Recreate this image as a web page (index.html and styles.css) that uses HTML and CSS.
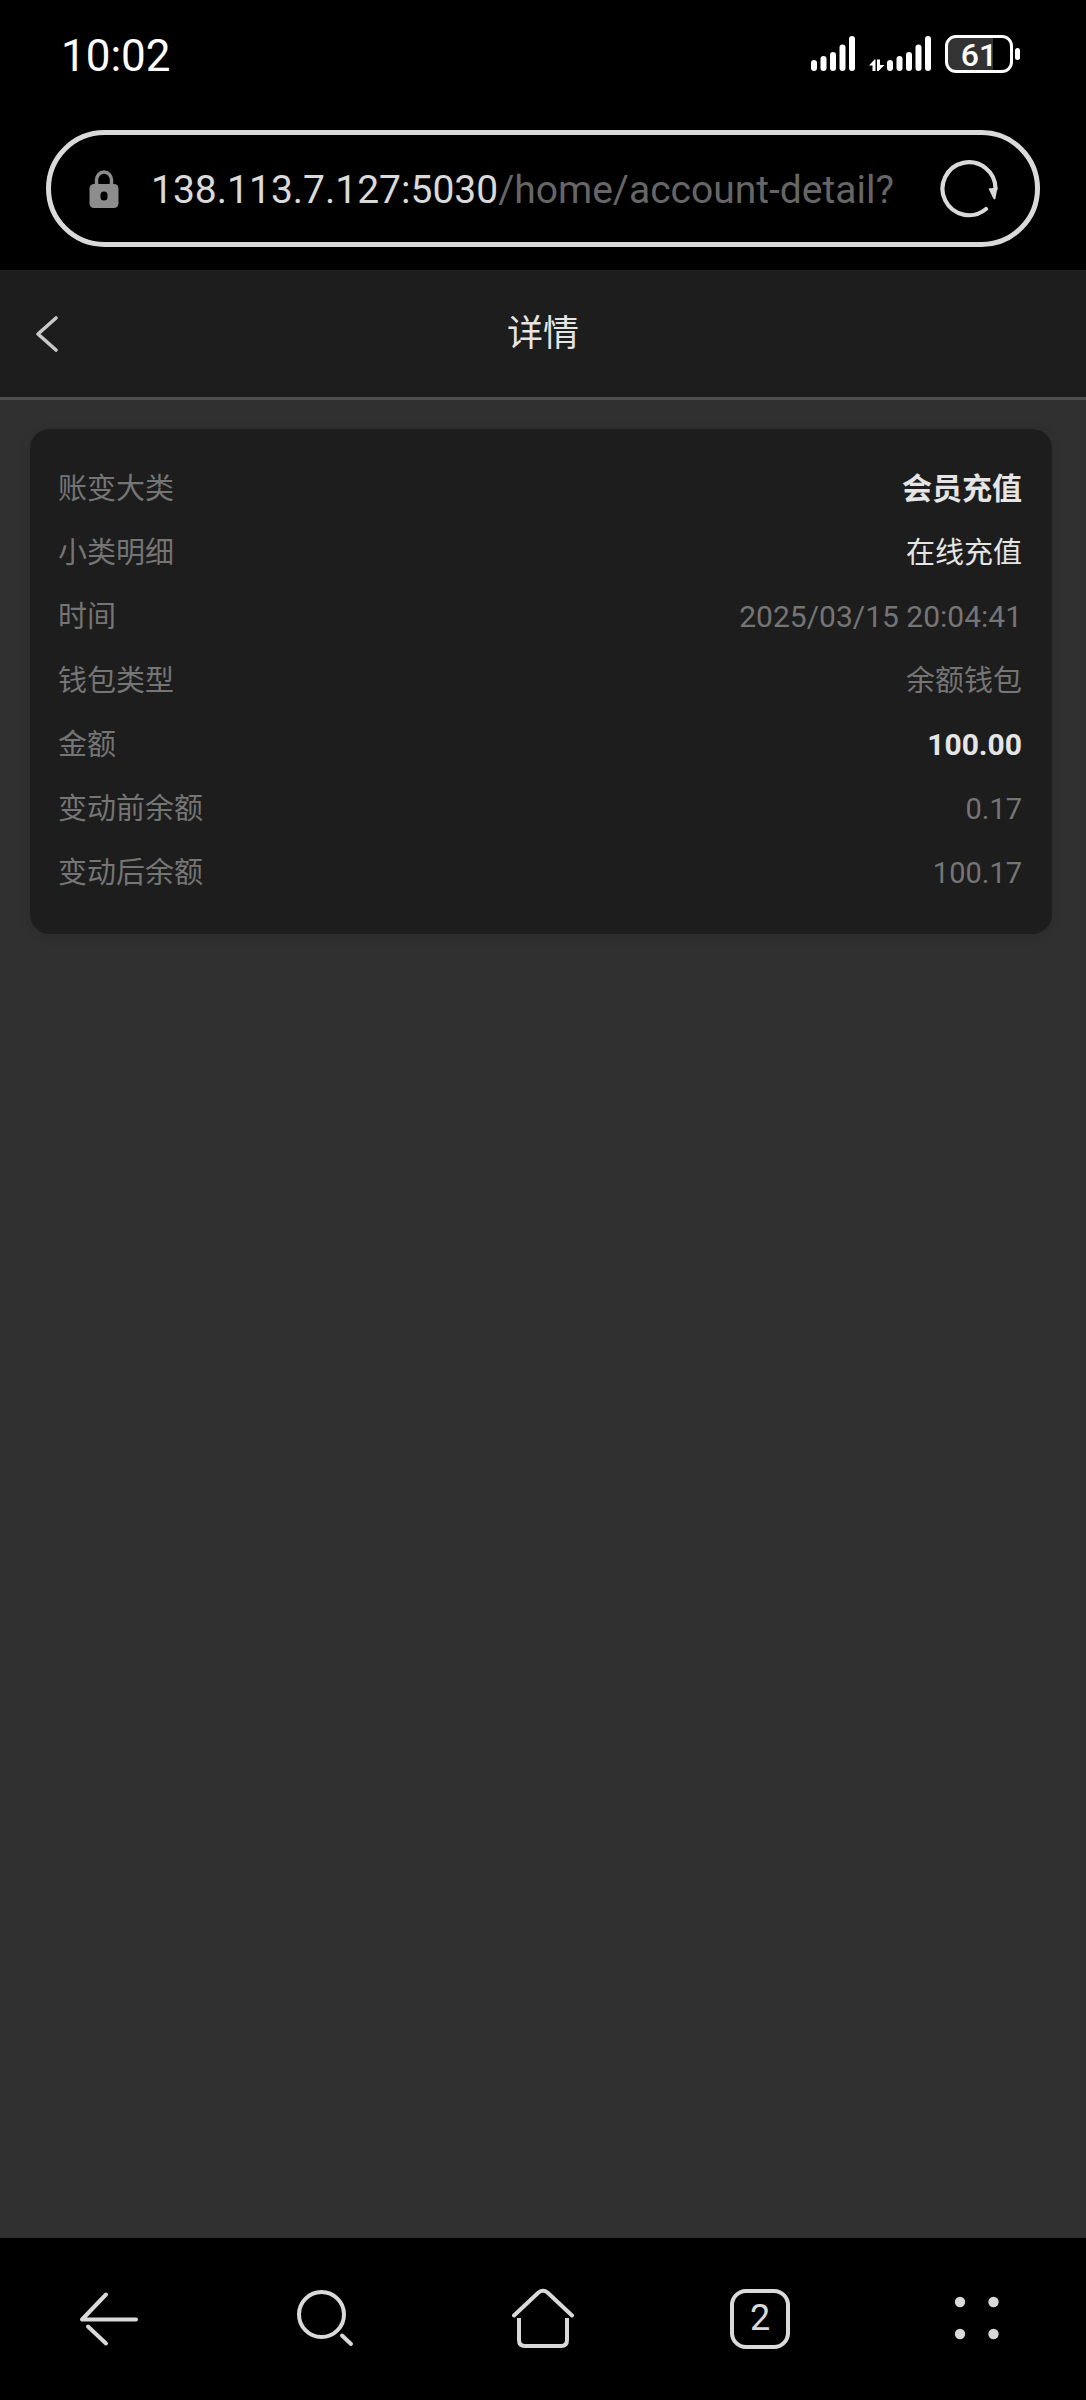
FILE: index.html
```html
<!DOCTYPE html>
<html lang="zh-CN">
<head>
    <meta charset="UTF-8">
    <meta name="viewport" content="width=device-width, initial-scale=1.0">
    <title>详情</title>
    <link rel="stylesheet" href="styles.css">
</head>
<body>
    <div class="status-bar">
        <span class="clock">10:02</span>
        <div class="status-icons">
            <svg class="signal" width="44" height="38" viewBox="0 0 44 38" fill="#fff">
                <rect x="0" y="25" width="6" height="11" rx="3"/>
                <rect x="9.5" y="21" width="6" height="15" rx="3"/>
                <rect x="19" y="17" width="6" height="19" rx="3"/>
                <rect x="28.5" y="9.5" width="6" height="26.5" rx="3"/>
                <rect x="38" y="1" width="6" height="35" rx="3"/>
            </svg>
            <svg class="signal" width="62" height="38" viewBox="0 0 62 38" fill="#fff">
                <path d="M0 30.5L5.500 24.500H6.500V36H3.500V30.500Z"/>
                <path d="M8 24.500H11V30H15.500L9.500 36H8Z"/>
                <rect x="18" y="25" width="6" height="11" rx="3"/>
                <rect x="27.5" y="21" width="6" height="15" rx="3"/>
                <rect x="37" y="17" width="6" height="19" rx="3"/>
                <rect x="46.5" y="9.5" width="6" height="26.5" rx="3"/>
                <rect x="56" y="1" width="6" height="35" rx="3"/>
            </svg>
            <div class="battery"><span>61</span></div>
            <span class="battery-cap"></span>
        </div>
    </div>

    <div class="browser-bar">
        <div class="address">
            <svg width="30" height="38" viewBox="0 0 30 38">
                <path d="M7.500 16V10a7.500 8 0 0 1 15 0v6" fill="none" stroke="#8d8d8d" stroke-width="3.5"/>
                <rect x="0.5" y="14" width="29" height="24" rx="4.5" fill="#8d8d8d"/>
                <rect x="11.5" y="21.5" width="7" height="9" rx="3.5" fill="#000"/>
            </svg>
            <button class="url" type="button"><span class="host">138.113.7.127:5030</span>/home/account-detail?</button>
            <button type="button" aria-label="刷新">
                <svg width="60" height="60" viewBox="0 0 60 60">
                    <path d="M47 50A26.500 26.500 0 1 1 56.500 30" fill="none" stroke="#dadada" stroke-width="4.2" stroke-linecap="round"/>
                    <path d="M49.500 29.500L58.500 28.500L56.500 39.500Q55.500 41.500 54 39Z" fill="#dadada"/>
                </svg>
            </button>
        </div>
    </div>

    <header class="page-header">
        <a href="#" aria-label="返回">
            <svg width="26" height="38" viewBox="0 0 26 38">
                <path d="M22 3L4 19L22 35" fill="none" stroke="#c9c9c9" stroke-width="3.6" stroke-linecap="round" stroke-linejoin="round"/>
            </svg>
        </a>
        <h1>详情</h1>
    </header>

    <main>
        <dl class="card">
            <div class="row"><dt>账变大类</dt><dd class="strong">会员充值</dd></div>
            <div class="row"><dt>小类明细</dt><dd class="light">在线充值</dd></div>
            <div class="row"><dt>时间</dt><dd><time>2025/03/15 20:04:41</time></dd></div>
            <div class="row"><dt>钱包类型</dt><dd>余额钱包</dd></div>
            <div class="row"><dt>金额</dt><dd class="strong">100.00</dd></div>
            <div class="row"><dt>变动前余额</dt><dd>0.17</dd></div>
            <div class="row"><dt>变动后余额</dt><dd>100.17</dd></div>
        </dl>
    </main>

    <nav class="toolbar">
        <button type="button" aria-label="后退">
            <svg width="64" height="64" viewBox="0 0 64 64">
                <path d="M29 7.500L5 32.500H59M11 39.500L29 56.500"/>
            </svg>
        </button>
        <button type="button" aria-label="搜索">
            <svg width="64" height="64" viewBox="0 0 64 64">
                <circle cx="27.500" cy="27.500" r="22.500"/>
                <path d="M48 48.500L57 57"/>
            </svg>
        </button>
        <button type="button" aria-label="主页">
            <svg width="64" height="64" viewBox="0 0 64 64">
                <path d="M3 28.500L27.500 5.500Q32 2 36.500 5.500L61 28.500"/>
                <path d="M8 31V53Q8 59 14 59H50Q56 59 56 53V31" stroke-linecap="butt"/>
            </svg>
        </button>
        <button type="button" aria-label="标签页">
            <span class="tabs">2</span>
        </button>
        <button type="button" aria-label="菜单">
            <svg class="dots" width="64" height="64" viewBox="0 0 64 64">
                <circle cx="15" cy="15" r="5.200"/>
                <circle cx="48.500" cy="15" r="5.200"/>
                <circle cx="15" cy="47" r="5.200"/>
                <circle cx="48.500" cy="47" r="5.200"/>
            </svg>
        </button>
    </nav>
</body>
</html>
```
FILE: styles.css
```css
* {
    box-sizing: border-box;
}
body {
    margin: 0;
    min-height: 100vh;
    display: flex;
    flex-direction: column;
    background: #303030;
    color: #757575;
    font-family: Roboto, "Noto Sans CJK SC", sans-serif;
}
button {
    padding: 0;
    border: none;
    background: none;
    color: inherit;
    font-family: inherit;
    cursor: pointer;
}
svg {
    display: block;
    flex-shrink: 0;
}

/* Phone status bar */
.status-bar {
    padding: 28px 66px 0 61px;
    display: flex;
    justify-content: space-between;
    align-items: flex-start;
    background: #000;
    color: #fff;
}
.clock {
    font-size: 44px;
    line-height: 56px;
}
.status-icons {
    display: flex;
    align-items: center;
    padding-top: 7px;
}
.signal {
    margin-right: 14px;
}
.battery {
    width: 68px;
    height: 38px;
    border: 3px solid #fff;
    border-radius: 11px;
    background: linear-gradient(90deg, #333 72%, #000 72%);
    font-size: 32px;
    line-height: 34px;
    font-weight: 500;
    text-align: center;
}
.battery-cap {
    width: 5px;
    height: 12px;
    margin-left: 2px;
    border-radius: 3px;
    background: #fff;
}

/* Browser address bar */
.browser-bar {
    padding: 46px 46px 23px;
    background: #000;
}
.address {
    height: 117px;
    padding: 0 36px 0 38px;
    display: flex;
    align-items: center;
    border: 5px solid #dadada;
    border-radius: 59px;
}
.url {
    flex: 1;
    margin: 0 40px 0 32px;
    padding-top: 2px;
    overflow: hidden;
    white-space: nowrap;
    text-align: left;
    font-size: 39px;
    line-height: 56px;
    color: #666;
}
.host {
    color: #dadada;
}

/* Page */
.page-header {
    height: 130px;
    padding: 0 34px;
    display: grid;
    grid-template-columns: 1fr auto 1fr;
    align-items: center;
    background: #1d1d1d;
    border-bottom: 3px solid #4e4e4e;
}
.page-header h1 {
    margin: 0;
    font-size: 36px;
    line-height: 48px;
    font-weight: 400;
    color: #e5e5e5;
}
main {
    flex: 1;
    padding: 29px 34px 29px 30px;
}
.card {
    margin: 0;
    padding: 28px 30px 29px 28px;
    border-radius: 20px;
    background: #1d1d1d;
    box-shadow: 0 2px 12px rgba(0, 0, 0, 0.1);
    font-size: 29px;
    line-height: 64px;
}
.row {
    height: 64px;
    display: flex;
    justify-content: space-between;
}
.row dd {
    margin: 0;
}
.row time {
    font-size: 30px;
}
.row .light {
    color: #e5e5e5;
}
.row .strong {
    color: #e5e5e5;
    font-size: 30px;
    font-weight: 700;
}

/* Bottom toolbar */
.toolbar {
    height: 162px;
    display: grid;
    grid-template-columns: repeat(5, 1fr);
    background: #000;
}
.toolbar button {
    display: flex;
    align-items: center;
    justify-content: center;
}
.toolbar svg {
    fill: none;
    stroke: #dadada;
    stroke-width: 4;
    stroke-linecap: round;
    stroke-linejoin: round;
}
.toolbar .dots {
    fill: #dadada;
    stroke: none;
}
.tabs {
    width: 60px;
    height: 60px;
    border: 4px solid #dadada;
    border-radius: 16px;
    font-size: 36px;
    line-height: 50px;
    color: #dadada;
}
```
